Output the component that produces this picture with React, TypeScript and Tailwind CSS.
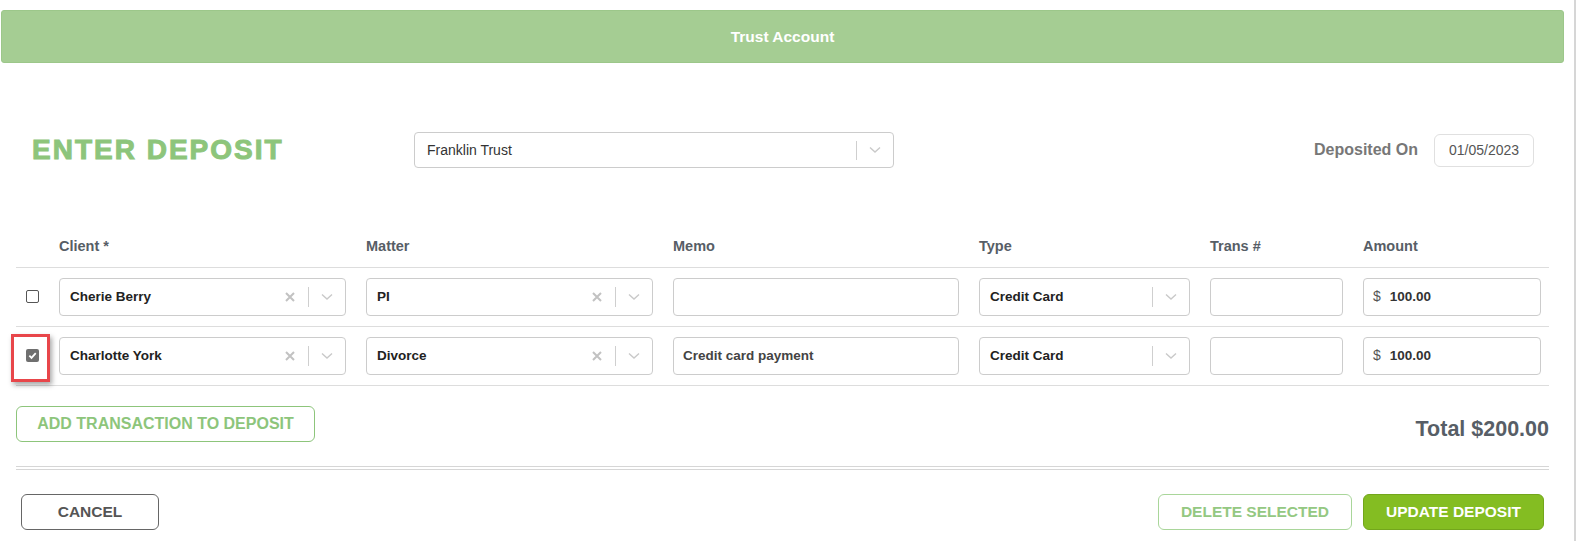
import React from 'react';

const font = "font-['Liberation_Sans',Arial,sans-serif]";

function Chevron() {
  return (
    <svg className="w-[12px] h-[8px]" viewBox="0 0 12 8" fill="none" stroke="#c9c9c9" strokeWidth={1.4}>
      <path d="M1 1.5l5 4.5 5-4.5" />
    </svg>
  );
}

function Cross() {
  return (
    <svg className="w-[10px] h-[10px]" viewBox="0 0 10 10" fill="none" stroke="#c2c2c2" strokeWidth={2}>
      <path d="M1 1l8 8M9 1l-8 8" />
    </svg>
  );
}

function SelectBox({ value, clearable = false, width }: { value: string; clearable?: boolean; width: string }) {
  return (
    <div className={`${width} h-[38px] flex items-center border border-[#cccccc] rounded-[4px] bg-white`}>
      <span className="flex-1 pl-[10px] text-[13.5px] font-bold text-[#222]">{value}</span>
      {clearable && (
        <span className="w-[36px] flex justify-center">
          <Cross />
        </span>
      )}
      <span className="w-px h-[20px] bg-[#cfcfcf]" />
      <span className="w-[36px] flex justify-center">
        <Chevron />
      </span>
    </div>
  );
}

function Field({ width, children }: { width: string; children?: React.ReactNode }) {
  return (
    <div className={`${width} h-[38px] flex items-center border border-[#cccccc] rounded-[4px] bg-white px-[9px] text-[13.5px]`}>
      {children}
    </div>
  );
}

type Row = { client: string; matter: string; memo: string; checked: boolean };

const rows: Row[] = [
  { client: 'Cherie Berry', matter: 'PI', memo: '', checked: false },
  { client: 'Charlotte York', matter: 'Divorce', memo: 'Credit card payment', checked: true },
];

export default function App() {
  return (
    <div className={`${font} w-[1576px] min-h-[541px] bg-white border-r-2 border-[#d6d6d6]`}>
      {/* Banner */}
      <div className="pt-[10px] pl-[1px] w-[1564px]">
        <div className="h-[53px] rounded-[3px] bg-[#a5cd93] border border-[#9cc78a] flex items-center justify-center">
          <span className="text-white font-bold text-[15.5px]">Trust Account</span>
        </div>
      </div>

      {/* Title row */}
      <div className="mt-[69px] h-[36px] flex items-center">
        <h1 className="ml-[32px] w-[382px] text-[28px] font-bold tracking-[2px] text-[#8dc57b] [-webkit-text-stroke:1px_#8dc57b] leading-none">
          ENTER DEPOSIT
        </h1>
        <div className="w-[480px] h-[36px] flex items-center border border-[#cccccc] rounded-[4px]">
          <span className="flex-1 pl-[12px] text-[14px] text-[#333]">Franklin Trust</span>
          <span className="w-px h-[19px] bg-[#cfcfcf]" />
          <span className="w-[36px] flex justify-center">
            <Chevron />
          </span>
        </div>
        <div className="flex-1" />
        <span className="text-[16px] font-bold text-[#777]">Deposited On</span>
        <div className="ml-[16px] mr-[40px] w-[100px] h-[33px] flex items-center justify-center border border-[#e0e0e0] rounded-[6px] text-[14px] text-[#555]">
          01/05/2023
        </div>
      </div>

      {/* Table */}
      <div className="mt-[68px] mx-[16px] w-[1533px]">
        <div className="flex gap-[20px] pb-[9px] border-b border-[#dddddd] text-[14.5px] font-bold text-[#575e66]">
          <div className="w-[23px]" />
          <div className="w-[287px]">Client *</div>
          <div className="w-[287px]">Matter</div>
          <div className="w-[286px]">Memo</div>
          <div className="w-[211px]">Type</div>
          <div className="w-[133px]">Trans #</div>
          <div className="w-[178px]">Amount</div>
        </div>

        {rows.map((r, i) => (
          <div key={i} className="flex items-center gap-[20px] py-[10px] border-b border-[#dddddd]">
            <div className="w-[23px] relative flex justify-center pl-[9px]">
              {r.checked ? (
                <span className="w-[13px] h-[13px] rounded-[2px] bg-[#6f6f6f] flex items-center justify-center">
                  <svg className="w-[9px] h-[9px]" viewBox="0 0 10 10" fill="none" stroke="white" strokeWidth={2}>
                    <path d="M1.5 5.2l2.4 2.4L8.6 2.4" />
                  </svg>
                </span>
              ) : (
                <span className="w-[13px] h-[13px] rounded-[2px] border border-[#555] bg-white" />
              )}
              {r.checked && (
                <div className="absolute left-[-5px] top-[-15px] w-[39px] h-[48px] border-[3px] border-[#e8464a] shadow-[2px_3px_5px_rgba(0,0,0,0.35)]" />
              )}
            </div>
            <SelectBox value={r.client} clearable width="w-[287px]" />
            <SelectBox value={r.matter} clearable width="w-[287px]" />
            <Field width="w-[286px]">
              <span className="font-bold text-[#444]">{r.memo}</span>
            </Field>
            <SelectBox value="Credit Card" width="w-[211px]" />
            <Field width="w-[133px]" />
            <Field width="w-[178px]">
              <span className="text-[#555] text-[14px]">$</span>
              <span className="ml-[9px] font-bold text-[#333]">100.00</span>
            </Field>
          </div>
        ))}

        <div className="mt-[20px] flex items-end justify-between">
          <button className="w-[299px] h-[36px] rounded-[6px] border border-[#8dc57b] text-[#8dc57b] font-bold text-[16px]">
            ADD TRANSACTION TO DEPOSIT
          </button>
          <span className="text-[21.5px] font-bold text-[#575e66] leading-[25px]">Total $200.00</span>
        </div>

        <div className="mt-[24px] h-[4px] border-y border-[#d6d6d6]" />

        <div className="mt-[24px] flex items-center">
          <button className="ml-[5px] w-[138px] h-[36px] rounded-[6px] border border-[#666] text-[#555] font-bold text-[15.5px]">
            CANCEL
          </button>
          <div className="flex-1" />
          <button className="w-[194px] h-[36px] rounded-[6px] border border-[#a9d69a] text-[#94c882] font-bold text-[15.5px]">
            DELETE SELECTED
          </button>
          <button className="ml-[11px] mr-[5px] w-[181px] h-[36px] rounded-[6px] bg-[#84bd22] border border-[#73a61c] text-white font-bold text-[15.5px]">
            UPDATE DEPOSIT
          </button>
        </div>
      </div>
    </div>
  );
}
